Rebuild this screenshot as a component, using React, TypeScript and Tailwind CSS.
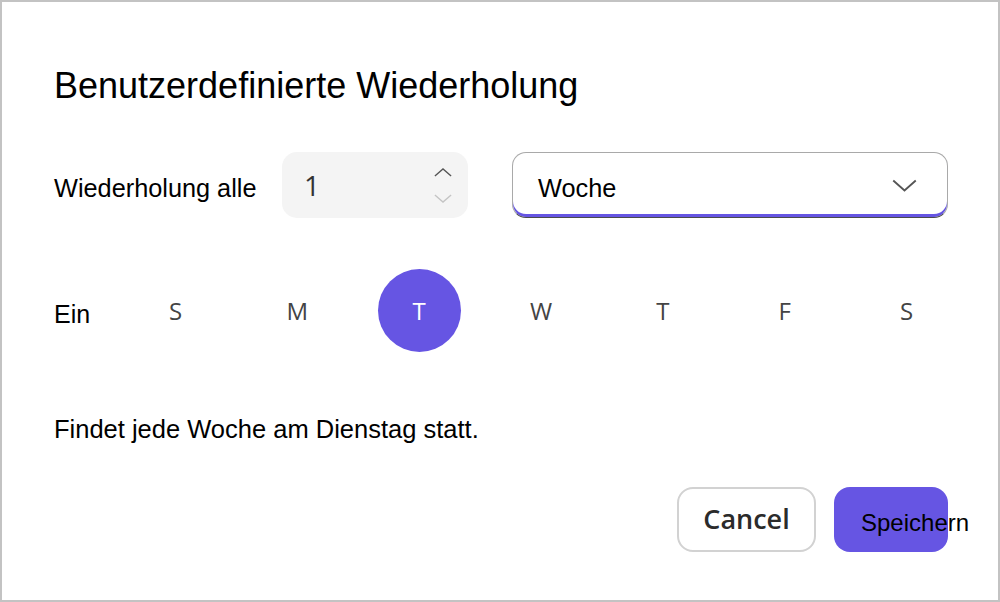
import React, { useState } from 'react';

const days = [
  { id: 'sun', label: 'S' },
  { id: 'mon', label: 'M' },
  { id: 'tue', label: 'T' },
  { id: 'wed', label: 'W' },
  { id: 'thu', label: 'T' },
  { id: 'fri', label: 'F' },
  { id: 'sat', label: 'S' },
];

const arial = "font-['Liberation_Sans',Arial,sans-serif]";
const segoe = "font-['Open_Sans','Noto_Sans',sans-serif]";

const Chevron: React.FC<{ up?: boolean; className?: string }> = ({ up, className }) => (
  <svg viewBox="0 0 20 10" className={className} fill="none" stroke="currentColor" strokeWidth={1.5}>
    {up ? <polyline points="1,9 10,1 19,9" /> : <polyline points="1,1 10,9 19,1" />}
  </svg>
);

const App: React.FC = () => {
  const [selectedDay, setSelectedDay] = useState('tue');
  const [count, setCount] = useState(1);

  return (
    <div className="w-[1000px] h-[602px] border-2 border-[#c3c3c3] bg-white pl-[52px] pr-[50px] pt-[66px] text-black">
      <h1 className={`${arial} text-[36px] leading-none`}>Benutzerdefinierte Wiederholung</h1>

      <div className="mt-[48px] flex items-center">
        <span className={`${arial} text-[25.3px] leading-none w-[228px] pt-[8px]`}>Wiederholung alle</span>
        <div className="w-[186px] h-[66px] rounded-[15px] bg-[#f4f4f4] flex items-center pl-[22px] pr-[16px]">
          <span className={`${segoe} text-[28px] leading-none text-[#333] flex-1`}>{count}</span>
          <div className="flex flex-col gap-[17px]">
            <button onClick={() => setCount(count + 1)} className="text-[#555]">
              <Chevron up className="w-[18px] h-[9px]" />
            </button>
            <button onClick={() => setCount(Math.max(1, count - 1))} className="text-[#c4c4c4]">
              <Chevron className="w-[18px] h-[9px]" />
            </button>
          </div>
        </div>
        <div className="ml-[44px] flex-1 h-[66px] rounded-[14px] border-[1.5px] border-[#a9a9a9] border-b-[#4a4a4a] shadow-[inset_0_-3px_0_#6655e3] flex items-center pl-[25px] pr-[30px]">
          <span className={`${arial} text-[25.3px] leading-none flex-1 pt-[7px]`}>Woche</span>
          <Chevron className="w-[25px] h-[13px] text-[#555]" />
        </div>
      </div>

      <div className="mt-[51px] flex items-center">
        <span className={`${arial} text-[25px] leading-none w-[80px] pt-[8px]`}>Ein</span>
        <div className="flex-1 flex justify-between">
          {days.map(day => (
            <button
              key={day.id}
              onClick={() => setSelectedDay(day.id)}
              className={`${segoe} w-[83px] h-[83px] rounded-full flex items-center justify-center text-[24px] ${
                selectedDay === day.id ? 'bg-[#6655e3] text-white' : 'text-[#444]'
              }`}
            >
              {day.label}
            </button>
          ))}
        </div>
      </div>

      <p className={`${arial} mt-[65px] text-[25.5px] leading-none`}>Findet jede Woche am Dienstag statt.</p>

      <div className="mt-[44px] flex justify-end gap-[18px]">
        <button className={`${segoe} w-[139px] h-[65px] rounded-[16px] border-2 border-[#d2d2d2] bg-white text-[27px] font-semibold text-[#2b2b2b]`}>
          Cancel
        </button>
        <button className={`${arial} w-[114px] h-[65px] rounded-[16px] bg-[#6655e3] text-[24px] text-black text-left pl-[27px] pt-[8px] whitespace-nowrap`}>
          Speichern
        </button>
      </div>
    </div>
  );
};

export default App;
